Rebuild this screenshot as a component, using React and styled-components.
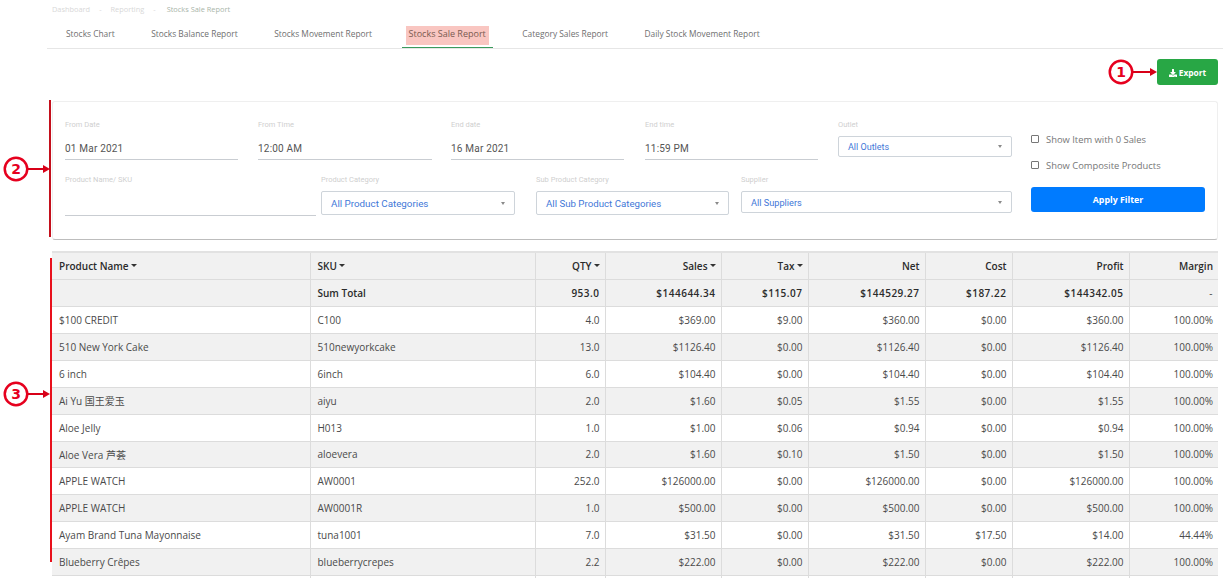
import styled, { createGlobalStyle } from "styled-components";
import { FaDownload } from "react-icons/fa";

const tabs = [
  "Stocks Chart",
  "Stocks Balance Report",
  "Stocks Movement Report",
  "Stocks Sale Report",
  "Category Sales Report",
  "Daily Stock Movement Report",
];

const rows = [
  ["$100 CREDIT", "C100", "4.0", "$369.00", "$9.00", "$360.00", "$0.00", "$360.00", "100.00%"],
  ["510 New York Cake", "510newyorkcake", "13.0", "$1126.40", "$0.00", "$1126.40", "$0.00", "$1126.40", "100.00%"],
  ["6 inch", "6inch", "6.0", "$104.40", "$0.00", "$104.40", "$0.00", "$104.40", "100.00%"],
  ["Ai Yu 国王爱玉", "aiyu", "2.0", "$1.60", "$0.05", "$1.55", "$0.00", "$1.55", "100.00%"],
  ["Aloe Jelly", "H013", "1.0", "$1.00", "$0.06", "$0.94", "$0.00", "$0.94", "100.00%"],
  ["Aloe Vera 芦荟", "aloevera", "2.0", "$1.60", "$0.10", "$1.50", "$0.00", "$1.50", "100.00%"],
  ["APPLE WATCH", "AW0001", "252.0", "$126000.00", "$0.00", "$126000.00", "$0.00", "$126000.00", "100.00%"],
  ["APPLE WATCH", "AW0001R", "1.0", "$500.00", "$0.00", "$500.00", "$0.00", "$500.00", "100.00%"],
  ["Ayam Brand Tuna Mayonnaise", "tuna1001", "7.0", "$31.50", "$0.00", "$31.50", "$17.50", "$14.00", "44.44%"],
  ["Blueberry Crêpes", "blueberrycrepes", "2.2", "$222.00", "$0.00", "$222.00", "$0.00", "$222.00", "100.00%"],
  ["", "", "", "", "", "", "", "", ""],
];

const columns = [
  { name: "Product Name", width: 258, sort: true },
  { name: "SKU", width: 225, sort: true },
  { name: "QTY", width: 70, sort: true, right: true },
  { name: "Sales", width: 116, sort: true, right: true },
  { name: "Tax", width: 87, sort: true, right: true },
  { name: "Net", width: 117, right: true },
  { name: "Cost", width: 87, right: true },
  { name: "Profit", width: 117, right: true },
  { name: "Margin", width: 89, right: true },
];

const totals = ["", "Sum Total", "953.0", "$144644.34", "$115.07", "$144529.27", "$187.22", "$144342.05", "-"];

const GlobalStyle = createGlobalStyle`
  html, body {
    margin: 0;
    height: 578px;
    overflow: hidden;
    background: #fff;
    font-family: "Open Sans", "Noto Sans CJK SC", sans-serif;
  }
`;

const Page = styled.div`
  position: relative;
  width: 1223px;
  height: 578px;
  overflow: hidden;
  box-sizing: border-box;
  padding-left: 47px;
`;

const Breadcrumb = styled.div`
  display: flex;
  gap: 9px;
  height: 19px;
  padding: 4px 0 0 5px;
  box-sizing: border-box;
  font-size: 7.4px;
  line-height: 11px;
  color: #d8d8d8;
`;

const Current = styled.span`
  margin-left: 2px;
  color: #a9b5a9;
`;

const Tabs = styled.nav`
  display: flex;
  height: 29px;
  padding-left: 12px;
  border-bottom: 1px solid #e6e6e6;
`;

const Tab = styled.div`
  padding: 7px 4px 0;
  margin-right: 22.5px;
  height: 21px;
  font-size: ${(p) => (p.$active ? 9 : 8.4)}px;
  color: ${(p) => (p.$active ? "#7a5a50" : "#6f6f6f")};
  border-bottom: ${(p) => (p.$active ? "1px solid #3a9a5c" : "none")};
  span {
    display: block;
    padding: 0 3px;
    height: 19px;
    line-height: 16px;
    background: ${(p) => (p.$active ? "#f9c6c1" : "transparent")};
  }
`;

const Actions = styled.div`
  display: flex;
  justify-content: flex-end;
  padding: 10px 5px 16px 0;
`;

const ExportButton = styled.button`
  display: flex;
  align-items: center;
  justify-content: center;
  gap: 2px;
  width: 61px;
  height: 26px;
  padding: 1px 0 0;
  border: none;
  border-radius: 3px;
  background: #28a745;
  color: #fff;
  font: 700 8.4px "Open Sans", sans-serif;
`;

const Card = styled.section`
  display: flex;
  gap: 19px;
  width: 1166px;
  height: 139px;
  margin-left: 5px;
  padding: 17px 12px 0;
  box-sizing: border-box;
  border-radius: 3px;
  border: 1px solid #efefef;
  border-bottom: 1px solid #bdbdbd;
`;

const Fields = styled.div`
  display: flex;
  flex: none;
  flex-direction: column;
  width: 947px;
  gap: 14px;
`;

const FieldRow = styled.div`
  display: flex;
`;

const Field = styled.div`
  display: flex;
  flex-direction: column;
  width: ${(p) => p.$width}px;
  margin-right: ${(p) => p.$gap || 0}px;
`;

const Label = styled.label`
  font: 400 7.5px/11px Roboto, sans-serif;
  color: #cfcfcf;
  height: 11px;
`;

const TextValue = styled.div`
  height: 30px;
  padding-top: 12px;
  box-sizing: border-box;
  border-bottom: 1px solid #c9cdd2;
  font: 400 10px/14px Roboto, sans-serif;
  color: #555;
  letter-spacing: 0.2px;
`;

const EmptyInput = styled.div`
  height: 30px;
  border-bottom: 1px solid #c9cdd2;
`;

const Select = styled.div`
  display: flex;
  align-items: center;
  justify-content: space-between;
  height: ${(p) => p.$height}px;
  margin-top: ${(p) => p.$top}px;
  padding: 0 9px 0 9px;
  box-sizing: border-box;
  border: 1px solid #ced4da;
  border-radius: 2px;
  font: 400 ${(p) => p.$size}px Roboto, sans-serif;
  color: #3f78d8;
  &::after {
    content: "";
    border: 2.5px solid transparent;
    border-top: 3px solid #8a8a8a;
    border-bottom: 0;
  }
`;

const Side = styled.div`
  display: flex;
  flex: none;
  flex-direction: column;
  width: 174px;
  padding-top: 7px;
`;

const Check = styled.label`
  display: flex;
  align-items: center;
  gap: 7px;
  height: 26px;
  font-size: 9.4px;
  color: #777;
  &::before {
    content: "";
    width: 6px;
    height: 6px;
    border: 1px solid #777;
    border-radius: 1px;
  }
`;

const ApplyButton = styled.button`
  height: 25px;
  margin-top: 9px;
  border: none;
  border-radius: 3px;
  background: #007bff;
  color: #fff;
  font: 700 8.8px "Open Sans", sans-serif;
`;

const Table = styled.table`
  width: 1166px;
  margin: 11px 0 0 5px;
  border-collapse: collapse;
  table-layout: fixed;
  border-top: 2px solid #e2e2e2;
  font-size: 10px;
  color: #4a4a4a;
`;

const Row = styled.tr`
  height: ${(p) => (p.$short ? 26 : 27)}px;
  background: ${(p) => (p.$shaded ? "#f1f1f1" : "#fff")};
`;

const Cell = styled.td`
  padding: 0 5px 0 7px;
  box-sizing: border-box;
  border: 1px solid #dcdcdc;
  border-top: none;
  border-left: none;
  text-align: ${(p) => (p.$right ? "right" : "left")};
  font-weight: ${(p) => (p.$bold ? 600 : 400)};
  color: ${(p) => (p.$bold ? "#2b2b2b" : "#4a4a4a")};
  letter-spacing: ${(p) => (p.$wide ? "0.5px" : "normal")};
  white-space: nowrap;
  &:last-child {
    border-right: none;
  }
`;

const Caret = styled.i`
  display: inline-block;
  margin-left: 2px;
  vertical-align: 3px;
  border: 3px solid transparent;
  border-top: 3px solid #333;
  border-bottom: 0;
`;

const Marker = styled.svg`
  position: absolute;
  left: ${(p) => p.$x}px;
  top: ${(p) => p.$y}px;
`;

const SideLine = styled.div`
  position: absolute;
  left: ${(p) => p.$x}px;
  top: ${(p) => p.$y}px;
  width: 2px;
  height: ${(p) => p.$h}px;
  background: ${(p) => p.$color};
`;

// red numbered callout, circle with an arrow pointing right
function Callout({ x, y, n, length }) {
  return (
    <Marker $x={x} $y={y} width={length + 30} height="30" viewBox={`0 0 ${length + 30} 30`}>
      <circle cx="15" cy="15" r="11.25" fill="#fff" stroke="#e6001e" strokeWidth="2.5" />
      <text x="15" y="20" textAnchor="middle" fontFamily="DejaVu Sans" fontWeight="700" fontSize="14" fill="#e6001e">
        {n}
      </text>
      <path d={`M27 15H${length + 24}`} stroke="#d80018" strokeWidth="2" />
      <path d={`M${length + 22} 11L${length + 29} 15L${length + 22} 19Z`} fill="#d80018" />
    </Marker>
  );
}

export default function App() {
  return (
    <Page>
      <GlobalStyle />
      <Breadcrumb>
        <span>Dashboard</span>
        <span>-</span>
        <span>Reporting</span>
        <span>-</span>
        <Current>Stocks Sale Report</Current>
      </Breadcrumb>
      <Tabs>
        {tabs.map((t) => (
          <Tab key={t} $active={t === "Stocks Sale Report"}>
            <span>{t}</span>
          </Tab>
        ))}
      </Tabs>
      <Actions>
        <ExportButton>
          <FaDownload size={8} />
          Export
        </ExportButton>
      </Actions>
      <Card>
        <Fields>
          <FieldRow>
            <Field $width={173} $gap={20}>
              <Label>From Date</Label>
              <TextValue>01 Mar 2021</TextValue>
            </Field>
            <Field $width={174} $gap={19}>
              <Label>From Time</Label>
              <TextValue>12:00 AM</TextValue>
            </Field>
            <Field $width={173} $gap={21}>
              <Label>End date</Label>
              <TextValue>16 Mar 2021</TextValue>
            </Field>
            <Field $width={173} $gap={20}>
              <Label>End time</Label>
              <TextValue>11:59 PM</TextValue>
            </Field>
            <Field $width={174}>
              <Label>Outlet</Label>
              <Select $height={21} $top={6} $size={9}>All Outlets</Select>
            </Field>
          </FieldRow>
          <FieldRow>
            <Field $width={251} $gap={5}>
              <Label>Product Name/ SKU</Label>
              <EmptyInput />
            </Field>
            <Field $width={194} $gap={21}>
              <Label>Product Category</Label>
              <Select $height={24} $top={6} $size={9.8}>All Product Categories</Select>
            </Field>
            <Field $width={193} $gap={12}>
              <Label>Sub Product Category</Label>
              <Select $height={24} $top={6} $size={9.7}>All Sub Product Categories</Select>
            </Field>
            <Field $width={271}>
              <Label>Supplier</Label>
              <Select $height={22} $top={6} $size={9.2}>All Suppliers</Select>
            </Field>
          </FieldRow>
        </Fields>
        <Side>
          <Check>Show Item with 0 Sales</Check>
          <Check>Show Composite Products</Check>
          <ApplyButton>Apply Filter</ApplyButton>
        </Side>
      </Card>
      <Table>
        <colgroup>
          {columns.map((c) => (
            <col key={c.name} width={c.width} />
          ))}
        </colgroup>
        <tbody>
          <Row $shaded>
            {columns.map((c) => (
              <Cell key={c.name} $bold $right={c.right}>
                {c.name}
                {c.sort && <Caret />}
              </Cell>
            ))}
          </Row>
          <Row $shaded>
            {totals.map((v, i) => (
              <Cell key={i} $bold={v !== "-"} $wide={columns[i].right} $right={columns[i].right}>
                {v}
              </Cell>
            ))}
          </Row>
          {rows.map((r, i) => (
            <Row key={i} $shaded={i % 2 === 1} $short={i === 5}>
              {r.map((v, j) => (
                <Cell key={j} $right={columns[j].right}>
                  {v}
                </Cell>
              ))}
            </Row>
          ))}
        </tbody>
      </Table>
      <SideLine $x={49} $y={100} $h={137} $color="#c4101c" />
      <SideLine $x={50} $y={258} $h={304} $color="#e8101c" />
      <Callout x={1106} y={57} n="1" length={22} />
      <Callout x={1} y={154} n="2" length={20} />
      <Callout x={1} y={379} n="3" length={20} />
    </Page>
  );
}
